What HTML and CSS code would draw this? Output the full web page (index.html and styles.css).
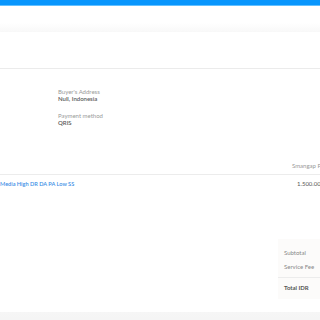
FILE: index.html
```html
<!DOCTYPE html>
<html>
<head>
<meta charset="utf-8">
<link rel="stylesheet" href="styles.css">
</head>
<body>
<div class="topbar"></div>
<div class="header"></div>
<div class="hero"></div>
<div class="info">
  <div class="field">
    <div class="label">Buyer's Address</div>
    <div class="value">Null, Indonesia</div>
  </div>
  <div class="field">
    <div class="label">Payment method</div>
    <div class="value">QRIS</div>
  </div>
</div>
<div class="table">
  <div class="thead"><span class="th">Smangap Pe</span></div>
  <div class="row">
    <span class="item">Media High DR DA PA Low SS</span>
    <span class="price">1.500.000</span>
  </div>
</div>
<div class="summary-wrap">
  <div class="summary">
    <div class="sline">Subtotal</div>
    <div class="sline">Service Fee</div>
    <div class="divider"></div>
    <div class="total">Total IDR</div>
  </div>
</div>
<div class="footer"></div>
</body>
</html>
```

FILE: styles.css
```css
html, body {
  margin: 0;
  padding: 0;
  background: #fff;
  font-family: Lato, "Open Sans", sans-serif;
  overflow: hidden;
  width: 320px;
  height: 320px;
}
.topbar {
  height: 5px;
  background: #0896fd;
  border-bottom: 1px solid #63c0ff;
}
.header {
  height: 26px;
  background: linear-gradient(to bottom, #fff 0%, #fff 65%, #f8f8f8 100%);
}
.hero {
  height: 36px;
  border-bottom: 1px solid #ebebeb;
}
.info {
  padding: 19px 0 0 58px;
  display: flex;
  flex-direction: column;
  gap: 10px;
  height: 60px;
}
.label {
  font-size: 6px;
  color: #9a9a9a;
  line-height: 7px;
}
.value {
  font-size: 6px;
  color: #5a5a5a;
  font-weight: 600;
  line-height: 7px;
}
.table {
  margin-top: 11px;
}
.thead {
  display: flex;
  justify-content: flex-start;
  padding-left: 292px;
  height: 15px;
  border-bottom: 1px solid #ececec;
  white-space: nowrap;
}
.th {
  font-size: 6px;
  color: #999;
  line-height: 7px;
  margin-top: 3px;
}
.row {
  display: flex;
  height: 17px;
  align-items: center;
  white-space: nowrap;
}
.item {
  font-size: 5.6px;
  color: #3a8ee6;
  font-weight: 600;
}
.price {
  font-size: 6px;
  color: #555;
  margin-left: auto;
  width: 23px;
}
.summary-wrap {
  display: flex;
  justify-content: flex-end;
  padding-top: 47px;
}
.summary {
  width: 42px;
  height: 60px;
  background: #fcfbfa;
  padding: 10px 0 0 6px;
  box-sizing: border-box;
}
.sline {
  font-size: 6px;
  color: #888;
  line-height: 7px;
  margin-bottom: 7px;
}
.divider {
  height: 1px;
  background: #ececec;
  margin: 0 0 6px -6px;
}
.total {
  font-size: 6px;
  color: #555;
  font-weight: 700;
  line-height: 7px;
}
.footer {
  margin-top: 13px;
  height: 20px;
  background: linear-gradient(to bottom, #f6f6f6, #f3f3f3);
}
```
